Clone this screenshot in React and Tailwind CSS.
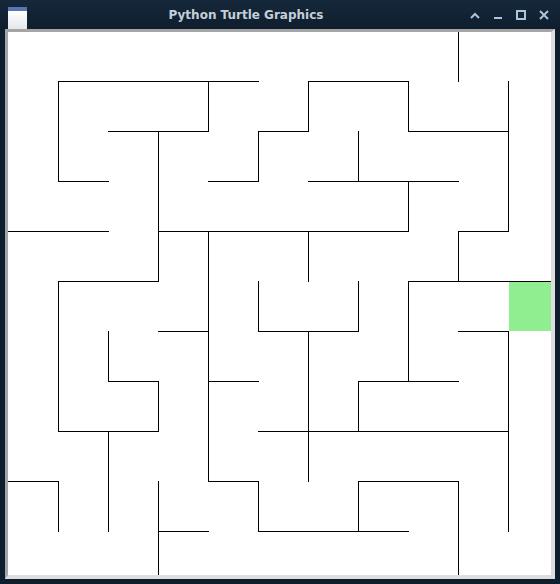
import React from 'react';

// maze walls in canvas pixels (page coords minus canvas origin 8,32)
const H = [
  [81, 58, 258], [81, 308, 408],
  [131, 108, 208], [131, 258, 308], [131, 408, 508],
  [181, 58, 108], [181, 208, 258], [181, 308, 458],
  [231, 8, 108], [231, 158, 408], [231, 458, 508],
  [281, 58, 158], [281, 408, 552],
  [331, 158, 208], [331, 258, 358], [331, 458, 508],
  [381, 108, 158], [381, 208, 258], [381, 358, 458],
  [431, 58, 158], [431, 258, 508],
  [481, 8, 58], [481, 208, 258], [481, 358, 458],
  [531, 158, 208], [531, 258, 408],
];

const V = [
  [58, 81, 181], [58, 281, 431], [58, 481, 531],
  [108, 331, 381], [108, 431, 531],
  [158, 131, 281], [158, 381, 431], [158, 481, 576],
  [208, 81, 131], [208, 231, 481],
  [258, 131, 181], [258, 281, 331], [258, 481, 531],
  [308, 81, 131], [308, 231, 281], [308, 331, 481],
  [358, 131, 181], [358, 281, 331], [358, 381, 431], [358, 481, 531],
  [408, 81, 131], [408, 181, 231], [408, 281, 381],
  [458, 32, 81], [458, 231, 281], [458, 481, 576],
  [508, 81, 231], [508, 331, 531],
];

const OX = 8;
const OY = 32;

const Maze = () => (
  <svg className="absolute inset-0" width="544" height="543" shapeRendering="crispEdges">
    <rect x={509 - OX} y={282 - OY} width="44" height="49" fill="#90ee90" />
    {H.map(([y, x1, x2], i) => (
      <line key={'h' + i} x1={x1 - OX} x2={x2 - OX + 1} y1={y - OY + 0.5} y2={y - OY + 0.5} stroke="#000" strokeWidth="1" />
    ))}
    {V.map(([x, y1, y2], i) => (
      <line key={'v' + i} x1={x - OX + 0.5} x2={x - OX + 0.5} y1={y1 - OY} y2={y2 - OY + 1} stroke="#000" strokeWidth="1" />
    ))}
  </svg>
);

const TitleButtons = () => (
  <div className="flex items-center w-[95px] pl-[5px] pr-[11px] gap-[13px] text-[#a9c6de]">
    <svg width="10" height="10" viewBox="0 0 10 10" fill="none" stroke="currentColor" strokeWidth="2">
      <path d="M1 8 L5 4 L9 8" />
    </svg>
    <svg width="10" height="10" viewBox="0 0 10 10" fill="currentColor">
      <rect x="1" y="7" width="8" height="2" />
    </svg>
    <svg width="10" height="10" viewBox="0 0 10 10" fill="none" stroke="currentColor" strokeWidth="2">
      <rect x="1" y="1" width="8" height="8" />
    </svg>
    <svg width="10" height="10" viewBox="0 0 10 10" fill="none" stroke="currentColor" strokeWidth="2">
      <path d="M1 1 L9 9 M9 1 L1 9" />
    </svg>
  </div>
);

export default function App() {
  return (
    <div className="w-[560px] h-[584px] bg-[#1b1b1b] overflow-hidden">
      <div className="w-full h-full flex flex-col bg-[#0f1e2d] rounded-t-[5px]">
        {/* title bar */}
        <div className="h-[29px] flex items-stretch bg-gradient-to-b from-[#15283b] to-[#0f1e2d]">
          <div className="ml-[8px] mt-[7px] w-[19px] flex flex-col">
            <div className="h-[4px] bg-[#5577b4]" />
            <div className="flex-1 bg-gradient-to-b from-[#ffffff] to-[#e4e8ec]" />
          </div>
          <div
            className="flex-1 flex items-center justify-center text-[12px] font-bold text-[#c4cfdb] pt-[1px]"
            style={{ fontFamily: '"DejaVu Sans", Verdana, sans-serif' }}
          >
            Python Turtle Graphics
          </div>
          <TitleButtons />
        </div>
        {/* canvas area */}
        <div className="flex-1 px-[5px] pb-[5px]">
          <div className="w-[550px] h-[550px] border-l-[3px] border-t-[3px] border-r-[4px] border-b-[4px] border-l-[#a5a5a5] border-t-[#a5a5a5] border-r-[#dedede] border-b-[#dedede]">
            <div className="relative w-full h-full bg-white overflow-hidden">
              <Maze />
            </div>
          </div>
        </div>
      </div>
    </div>
  );
}
